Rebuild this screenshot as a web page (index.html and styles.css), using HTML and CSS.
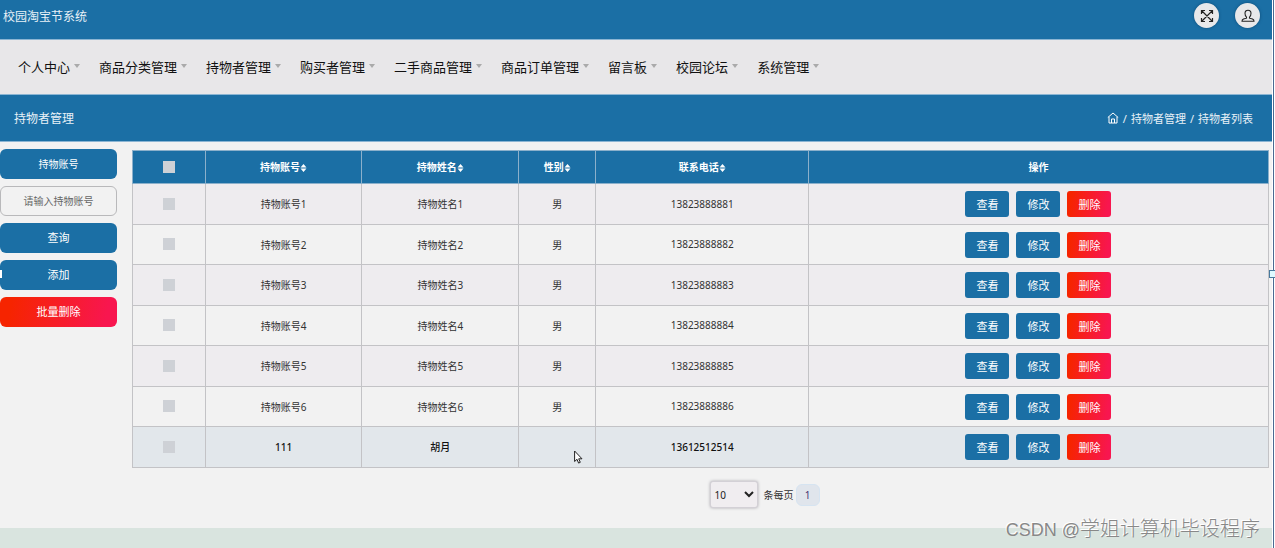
FILE: index.html
```html
<!DOCTYPE html>
<html lang="zh-CN">
<head>
<meta charset="utf-8">
<title>校园淘宝节系统</title>
<link rel="stylesheet" href="styles.css">
</head>
<body>
<div class="page">
  <header class="topbar">
    <h1 class="brand">校园淘宝节系统</h1>
    <div class="tools">
      <button class="round" type="button" aria-label="全屏">
        <svg width="14" height="14" viewBox="0 0 14 14" fill="none" stroke="#222" stroke-width="1.2"><path d="M2 2l10 10M12 2L2 12M1.500 5V1.500H5M9 1.500h3.500V5M12.500 9v3.500H9M5 12.500H1.500V9"/></svg>
      </button>
      <button class="round" type="button" aria-label="用户">
        <svg width="14" height="14" viewBox="0 0 14 14" fill="none" stroke="#222" stroke-width="1.100"><path d="M5.500 8.200C4.300 7.200 4 5.800 4 4.300C4 2.300 5.200 1.200 7 1.200s3 1.100 3 3.100c0 1.500-.3 2.900-1.500 3.900v1l3 .8c1 .4 1.500 1 1.500 2.300H1c0-1.300.5-1.900 1.500-2.300l3-.8z"/></svg>
      </button>
    </div>
  </header>
  <nav class="menu">
    <a href="#">个人中心</a>
    <a href="#">商品分类管理</a>
    <a href="#">持物者管理</a>
    <a href="#">购买者管理</a>
    <a href="#">二手商品管理</a>
    <a href="#">商品订单管理</a>
    <a href="#">留言板</a>
    <a href="#">校园论坛</a>
    <a href="#">系统管理</a>
  </nav>
  <div class="band">
    <h2 class="band-title">持物者管理</h2>
    <div class="crumbs">
      <a href="#" aria-label="首页"><svg width="12" height="12" viewBox="0 0 12 12" fill="none" stroke="#fff" stroke-width="1"><path d="M.8 5.500L6 1l5.200 4.500M2 4.800V11h8V4.800M4.500 11V7h3v4"/></svg></a>
      <span>/</span><a href="#">持物者管理</a><span>/</span><span>持物者列表</span>
    </div>
  </div>
  <main class="main">
    <form class="side">
      <label class="btn" for="account">持物账号</label>
      <input class="field" id="account" type="text" placeholder="请输入持物账号">
      <button class="btn" type="button">查询</button>
      <button class="btn" type="button">添加</button>
      <button class="btn danger" type="button">批量删除</button>
    </form>
    <section class="content">
      <table class="grid">
        <colgroup><col class="c-check"><col class="c-name"><col class="c-name"><col class="c-sex"><col class="c-phone"><col></colgroup>
        <thead>
          <tr>
            <th><input type="checkbox" aria-label="全选"></th>
            <th>持物账号<svg class="sort" width="7" height="8" viewBox="0 0 6 8"><path d="M0 3.500L3 0l3 3.500zM0 4.500h6L3 8z"/></svg></th>
            <th>持物姓名<svg class="sort" width="7" height="8" viewBox="0 0 6 8"><path d="M0 3.500L3 0l3 3.500zM0 4.500h6L3 8z"/></svg></th>
            <th>性别<svg class="sort" width="7" height="8" viewBox="0 0 6 8"><path d="M0 3.500L3 0l3 3.500zM0 4.500h6L3 8z"/></svg></th>
            <th>联系电话<svg class="sort" width="7" height="8" viewBox="0 0 6 8"><path d="M0 3.500L3 0l3 3.500zM0 4.500h6L3 8z"/></svg></th>
            <th>操作</th>
          </tr>
        </thead>
        <tbody>
          <tr><td><input type="checkbox" aria-label="选择第1行"></td><td>持物账号1</td><td>持物姓名1</td><td>男</td><td>13823888881</td><td><div class="ops"><button type="button">查看</button><button type="button">修改</button><button class="danger" type="button">删除</button></div></td></tr>
          <tr><td><input type="checkbox" aria-label="选择第2行"></td><td>持物账号2</td><td>持物姓名2</td><td>男</td><td>13823888882</td><td><div class="ops"><button type="button">查看</button><button type="button">修改</button><button class="danger" type="button">删除</button></div></td></tr>
          <tr><td><input type="checkbox" aria-label="选择第3行"></td><td>持物账号3</td><td>持物姓名3</td><td>男</td><td>13823888883</td><td><div class="ops"><button type="button">查看</button><button type="button">修改</button><button class="danger" type="button">删除</button></div></td></tr>
          <tr><td><input type="checkbox" aria-label="选择第4行"></td><td>持物账号4</td><td>持物姓名4</td><td>男</td><td>13823888884</td><td><div class="ops"><button type="button">查看</button><button type="button">修改</button><button class="danger" type="button">删除</button></div></td></tr>
          <tr><td><input type="checkbox" aria-label="选择第5行"></td><td>持物账号5</td><td>持物姓名5</td><td>男</td><td>13823888885</td><td><div class="ops"><button type="button">查看</button><button type="button">修改</button><button class="danger" type="button">删除</button></div></td></tr>
          <tr><td><input type="checkbox" aria-label="选择第6行"></td><td>持物账号6</td><td>持物姓名6</td><td>男</td><td>13823888886</td><td><div class="ops"><button type="button">查看</button><button type="button">修改</button><button class="danger" type="button">删除</button></div></td></tr>
          <tr class="active"><td><input type="checkbox" aria-label="选择第7行"></td><td>111</td><td>胡月</td><td></td><td>13612512514</td><td><div class="ops"><button type="button">查看</button><button type="button">修改</button><button class="danger" type="button">删除</button></div></td></tr>
        </tbody>
      </table>
      <div class="pager">
        <select id="size"><option>10</option><option>20</option></select>
        <label for="size">条每页</label>
        <button class="num" type="button">1</button>
      </div>
    </section>
  </main>
  <footer class="foot"></footer>
</div>
<span class="handle left"></span>
<span class="handle right"></span>
<svg class="cursor" width="9" height="14" viewBox="0 0 9 14"><path d="M.6 1v10.500l2.400-2.200 1.600 3.800 1.700-.8-1.600-3.500H8z" fill="#fff" stroke="#222" stroke-width="1"/></svg>
<div class="mark"><span class="mark-site">CSDN @</span>学姐计算机毕设程序</div>
</body>
</html>
```
FILE: styles.css
```css
* { box-sizing: border-box; }
body {
  margin: 0;
  position: relative;
  background: #fff;
  font-family: "Noto Sans", "Noto Sans CJK SC", sans-serif;
  font-size: 10px;
  color: #333;
}
button, input, select { font: inherit; color: inherit; margin: 0; }
a { color: inherit; text-decoration: none; }
.page {
  min-height: 100vh;
  margin-right: 1px;
  border-right: 1px solid #4a6a92;
  padding-right: 1px;
  display: flex;
  flex-direction: column;
}
.topbar {
  height: 40px;
  padding: 0 12px 8px 3px;
  display: flex;
  align-items: center;
  justify-content: space-between;
  background: #1b6fa5;
  border-bottom: 1px solid #8bb5d3;
  color: #e8f1f7;
}
.brand { margin: 0; font-size: 12px; font-weight: 400; }
.tools { display: flex; gap: 16px; }
.round {
  width: 25px;
  height: 25px;
  padding: 0;
  border: 0;
  border-radius: 50%;
  background: #e8e8ea;
  box-shadow: 0 0 3px #0d4a75;
  display: grid;
  place-items: center;
}
.menu {
  height: 55px;
  padding: 0 18px 2px;
  display: flex;
  align-items: center;
  gap: 19px;
  background: #e8e7e9;
  border-bottom: 1px solid #8bb5d3;
  font-size: 13px;
  color: #111;
}
.menu a { display: flex; align-items: center; gap: 4px; white-space: nowrap; }
.menu a::after {
  content: "";
  border: 3px solid transparent;
  border-top: 4px solid #aaa;
  border-bottom: 0;
}
.band {
  height: 47px;
  padding: 0 19px 0 14px;
  display: flex;
  align-items: center;
  justify-content: space-between;
  background: #1b6fa5;
  border-bottom: 1px solid #8bb5d3;
  color: #e8f1f7;
}
.band-title { margin: 0; font-size: 12px; font-weight: 400; }
.crumbs { display: flex; align-items: center; gap: 4px; font-size: 11px; }
.crumbs svg { display: block; }
.main {
  flex: 1;
  display: flex;
  align-items: flex-start;
  gap: 15px;
  padding: 7px 3px 19px 0;
  background: #f2f2f2;
}
.side { width: 117px; display: flex; flex-direction: column; gap: 7px; }
.btn, .field {
  width: 100%;
  height: 30px;
  border: 0;
  border-radius: 6px;
  text-align: center;
}
.btn {
  display: grid;
  place-items: center;
  padding: 0 0 2px;
  background: #1b6fa5;
  color: #fff;
  font-size: 11px;
}
label.btn { font-size: 10px; }
.field { border: 1px solid #b9b9bb; background: #f2f2f2; }
.field::placeholder { color: #666; }
.btn.danger, .ops .danger { background: linear-gradient(100deg, #f62400 10%, #f8164f 90%); }
.content { flex: 1; min-width: 0; padding-top: 1px; }
.grid { width: 100%; table-layout: fixed; border-collapse: collapse; text-align: center; }
.c-check { width: 6.4%; }
.c-name { width: 13.8%; }
.c-sex { width: 6.8%; }
.c-phone { width: 18.7%; }
th, td { padding: 0 0 1px; border: 1px solid #c3c3c6; }
th { border-color: #8bb0cb; }
td:last-child { padding: 0; }
thead tr { height: 33px; background: #1b6fa5; color: #fff; }
tbody tr { height: 41px; background: #eeecef; }
tbody tr:nth-child(even) { height: 40px; background: #f2f2f2; }
tbody tr.active { background: #e2e7eb; color: #111; font-weight: 500; }
.sort { fill: #fff; vertical-align: -1px; }
.grid input {
  appearance: none;
  display: block;
  width: 12px;
  height: 12px;
  margin: 0 auto;
  background: #ced1d6;
}
.ops { display: flex; justify-content: center; gap: 7px; }
.ops button {
  width: 44px;
  height: 26px;
  padding: 0;
  border: 0;
  border-radius: 3px;
  background: #1b6fa5;
  color: #fff;
  font-size: 11px;
  font-weight: 400;
}
.pager {
  padding: 13px 0 0 128px;
  display: flex;
  align-items: center;
  justify-content: center;
}
.pager select {
  width: 48px;
  height: 27px;
  padding: 0;
  border: 1px solid #d3d0d6;
  border-radius: 3px;
  background: #f0edf0;
  box-shadow: 0 0 3px #aaa8ae;
  color: #222;
}
.pager label { margin: 0 2px 0 6px; }
.num {
  width: 24px;
  height: 22px;
  padding: 0;
  border: 1px solid #d6e4f1;
  border-radius: 6px;
  background: #e0e5ec;
  color: #4a3270;
}
.foot { height: 20px; background: #d9e4df; }
.handle { position: absolute; top: 270px; height: 8px; background: #fff; }
.handle.left { left: 0; width: 2px; }
.handle.right { right: 0; width: 6px; background: #dffaff; border: 1px solid #4a7a9e; border-right: 0; }
.cursor { position: absolute; left: 574px; top: 450px; }
.mark {
  position: absolute;
  right: 15px;
  bottom: 4px;
  font: 300 20px/28px "Liberation Sans", "Noto Sans CJK SC", sans-serif;
  color: #888;
  text-shadow: -1px -1px #fff;
}
.mark-site { font-size: 18px; }
```
